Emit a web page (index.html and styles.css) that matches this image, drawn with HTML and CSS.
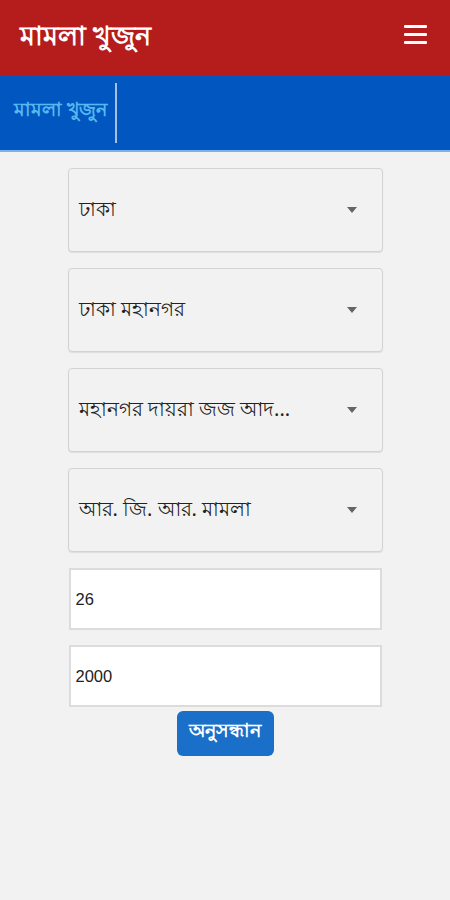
FILE: index.html
```html
<!DOCTYPE html>
<html lang="bn">
<head>
<meta charset="utf-8">
<title>মামলা খুজুন</title>
<link rel="stylesheet" href="styles.css">
</head>
<body>
<header class="topbar">
  <h1 class="title">মামলা খুজুন</h1>
  <button class="menu" aria-label="menu">
    <span></span><span></span><span></span>
  </button>
</header>
<nav class="tabbar">
  <span class="tab">মামলা খুজুন</span>
  <span class="divider"></span>
</nav>
<main class="form">
  <div class="select"><span class="value">ঢাকা</span><span class="caret"></span></div>
  <div class="select"><span class="value">ঢাকা মহানগর</span><span class="caret"></span></div>
  <div class="select"><span class="value">মহানগর দায়রা জজ আদ...</span><span class="caret"></span></div>
  <div class="select"><span class="value">আর. জি. আর. মামলা</span><span class="caret"></span></div>
  <div class="field first">26</div>
  <div class="field second">2000</div>
  <button class="search">অনুসন্ধান</button>
</main>
</body>
</html>
```

FILE: styles.css
```css
* { box-sizing: border-box; }
html, body { margin: 0; padding: 0; }
body {
  background: #f2f2f2;
  font-family: "Noto Sans", "Liberation Sans", sans-serif;
  width: 450px;
  height: 900px;
}
.topbar {
  background: #b51c1c;
  height: 76px;
  display: flex;
  align-items: center;
  justify-content: space-between;
  padding: 0 23px 0 20px;
}
.title {
  margin: 0;
  color: #fff;
  font-size: 26.5px;
  font-weight: 700;
  line-height: 1;
  padding-bottom: 6px;
}
.menu {
  background: none;
  border: 0;
  padding: 0;
  width: 23px;
  height: 19px;
  display: flex;
  flex-direction: column;
  justify-content: space-between;
  margin-bottom: 7px;
}
.menu span {
  display: block;
  height: 3px;
  background: #fff;
  border-radius: 1px;
}
.tabbar {
  background: #0156c0;
  height: 76px;
  border-bottom: 2px solid #7fb0ee;
  display: flex;
  align-items: center;
  padding-left: 14px;
}
.tab {
  color: #56b8f0;
  font-size: 18.7px;
  font-weight: 700;
  margin-right: 8px;
  padding-bottom: 4px;
}
.divider {
  width: 2px;
  height: 60px;
  background: #a7bfe0;
}
.form {
  display: flex;
  flex-direction: column;
  align-items: center;
  padding-top: 16px;
}
.select {
  width: 315px;
  height: 84px;
  border: 1px solid #d2d2d2;
  border-radius: 4px;
  background: #f2f2f2;
  box-shadow: 0 1px 1px rgba(0,0,0,0.08);
  display: flex;
  align-items: center;
  justify-content: space-between;
  padding: 0 25px 0 10px;
  margin-bottom: 16px;
}
.value {
  font-size: 20px;
  color: #222;
}
.caret {
  width: 0;
  height: 0;
  border-left: 5px solid transparent;
  border-right: 5px solid transparent;
  border-top: 6px solid #666;
}
.field {
  width: 313px;
  height: 62px;
  background: #fff;
  border: 2px solid #dcdcdc;
  display: flex;
  align-items: center;
  padding-left: 5px;
  font-family: "Liberation Sans", sans-serif;
  font-size: 16.5px;
  color: #222;
}
.field.first { margin-bottom: 15px; }
.field.second { margin-bottom: 4px; }
.search {
  width: 97px;
  height: 45px;
  background: #1a6fc9;
  border: 0;
  border-radius: 6px;
  color: #fff;
  font-family: "Noto Sans", "Liberation Sans", sans-serif;
  font-size: 18.5px;
  font-weight: 700;
  padding: 0 0 3px;
}
```
